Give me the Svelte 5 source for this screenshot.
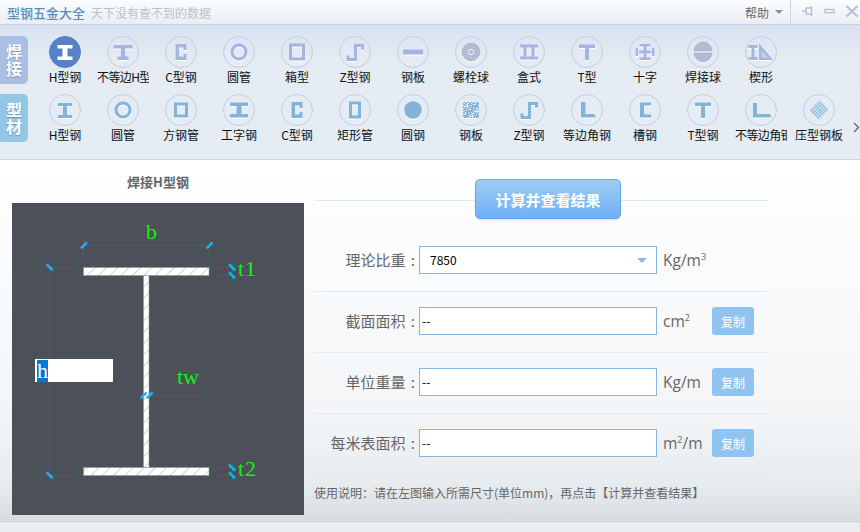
<script>
  const r = (x, y, w, h) => `M${x} ${y}h${w}v${h}h${-w}z`;
  const c = (x, y, a) => `M${x - a} ${y}a${a} ${a} 0 1 0 ${a * 2} 0a${a} ${a} 0 1 0 ${-a * 2} 0z`;

  const I = r(8.5, 9, 15, 3.5) + r(13.5, 12.5, 5, 8) + r(8.5, 20.5, 15, 3.5);
  const Ismall = r(9, 9, 14, 3) + r(14, 12, 4, 9) + r(9, 21, 14, 3);
  const Iunequal = r(6.5, 9, 19, 3.5) + r(14, 12.5, 4, 8) + r(10.5, 20.5, 11, 3.5);
  const Cshape = 'M10.5 8h11v6h-3v-2.5h-4.5v9h4.5V18h3v6h-11z';
  const ring = c(16, 16, 8.5) + c(16, 16, 5.5);
  const box = r(8, 7.5, 16, 17) + r(11, 10.5, 10, 11);
  const zed = 'M7.5 19.5h3v2.5h4.5V8h10v5.5h-3V11h-4v14H7.5z';
  const plate = r(6, 13.5, 20, 5);
  const bolt = c(16, 16, 9) + c(16, 16, 3.5) + c(16, 16, 1.7);
  const boxed = r(7, 8.5, 18, 3) + r(10.5, 11.5, 3, 9) + r(18.5, 11.5, 3, 9) + r(7, 20.5, 18, 3);
  const tee = r(8, 8.5, 16, 3.5) + r(14, 12, 4, 12);
  const cross = r(10.5, 8, 11, 2.5) + r(10.5, 21.5, 11, 2.5) + r(6.5, 12, 2.5, 8) + r(23, 12, 2.5, 8) +
    'M14.5 10.5h3v4h4.5v3h-4.5v4h-3v-4H10v-3h4.5z';
  const ballWeld = 'M7 15a9 9 0 0 1 18 0zM7 17h18a9 9 0 0 1-18 0z';
  const wedge = r(3.5, 9, 9, 3) + r(6.5, 12, 3, 9) + r(3.5, 21, 9, 3) + 'M14 7.5l14 16.5H14z';
  const wedgeIn = 'M16.5 14.5l7.5 7.5h-7.5z';
  const flaredI = 'M7 8.5h18v3.5h-6.5v8h6.5v3.5H7V20h6.5v-8H7z';
  const square = r(9, 8.5, 14, 15) + r(12, 11.5, 8, 9);
  const tall = r(10, 7.5, 12, 17) + r(13, 10.5, 6, 11);
  const solid = c(16, 16, 8.8);
  const angle = 'M10 8h4.5v12h8.5l2 3.5H10z';
  const channel = 'M11 8.5h11v3h-7v9h7v3H11z';
  const angleWide = 'M8 9h4v11h13l1.5 3.5H8z';

  const weld = [
    ['H型钢', I, 'sel'], ['不等边H型', Iunequal, 'clip'], ['C型钢', Cshape], ['圆管', ring],
    ['箱型', box], ['Z型钢', zed], ['钢板', plate], ['螺栓球', bolt, 'ball'],
    ['盒式', boxed], ['T型', tee], ['十字', cross], ['焊接球', ballWeld, 'ball'], ['楔形', wedge, 'wedge']
  ];
  const sect = [
    ['H型钢', Ismall], ['圆管', ring], ['方钢管', square], ['工字钢', flaredI],
    ['C型钢', Cshape], ['矩形管', tall], ['圆钢', solid], ['钢板', '', 'stipple'],
    ['Z型钢', zed], ['等边角钢', angle], ['槽钢', channel], ['T型钢', tee],
    ['不等边角钢', angleWide, 'clip'], ['压型钢板', '', 'corr']
  ];
  const rows = [
    { tab: ['焊', '接'], tone: 'violet', items: weld },
    { tab: ['型', '材'], tone: 'blue', items: sect }
  ];
  const forward = [[69, 45.3], [194.7, 45.3], [128.7, 195.3], [134.7, 195.3]];
  const back = [[34.7, 61.3], [34.7, 269.3], [217, 61.3], [217, 69.3], [217, 261.7], [217, 269.3]];

  const dots = [];
  for (let y = 0; y < 16; y++) {
    for (let x = 0; x < 16; x++) {
      if ((x * 7 + y * 13 + ((x * y) % 5)) % 3 === 0) dots.push([8 + x, 8 + y]);
    }
  }
  const bands = [0, 1, 2, 3, 4, 5];
</script>

<div class="app">
  <header class="title">
    <strong>型钢五金大全</strong>
    <span class="slogan">天下没有查不到的数据</span>
    <div class="win">
      <span class="help">帮助</span>
      <i class="caret"></i>
      <i class="sep"></i>
      <svg width="59" height="14" viewBox="0 0 59 14" fill="none" stroke="#b4c1cf" stroke-width="1.4">
        <path d="M1 7h4M5 3.5v7M5 4h5.5M5 10h5.5M10.5 2v10" />
        <rect x="24" y="5.5" width="9" height="3.2" />
        <path d="M45.5 2l11 10.5M56.5 2l-11 10.5" stroke-width="2.2" />
      </svg>
    </div>
  </header>

  <nav class="tools">
    {#each rows as row}
      <div class="row {row.tone}">
        <div class="tab">{row.tab[0]}<br />{row.tab[1]}</div>
        {#each row.items as [label, d, kind]}
          <div class="item">
            <svg class="ico" width="32" height="32" viewBox="0 0 32 32">
              <circle class={kind === 'sel' ? 'disc on' : 'disc'} cx="16" cy="16" r="15.5" />
              {#if kind === 'stipple'}
                <rect class="shape" x="8" y="8" width="16" height="16" />
                <g fill="#e2ebf4">
                  {#each dots as [x, y]}
                    <rect {x} {y} width="1" height="1" />
                  {/each}
                </g>
              {:else if kind === 'corr'}
                <g class="shape" transform="rotate(45 16 16)">
                  {#each bands as b}
                    <rect x="9.5" y={9.4 + b * 2.4} width="13" height="1.4" />
                  {/each}
                </g>
              {:else}
                <path class={kind === 'sel' ? 'shape white' : kind === 'ball' ? 'shape grey' : 'shape'} {d} fill-rule="evenodd" />
                {#if kind === 'wedge'}
                  <path d={wedgeIn} fill="#c3cdee" />
                {/if}
              {/if}
            </svg>
            <span class={kind === 'clip' ? 'lbl clip' : 'lbl'}>{label}</span>
          </div>
        {/each}
        {#if row.tone === 'blue'}
          <svg class="more" width="7" height="11" viewBox="0 0 7 11" fill="none" stroke="#56677c" stroke-width="1.3">
            <path d="M1 1l4.5 4.5L1 10" />
          </svg>
        {/if}
      </div>
    {/each}
  </nav>

  <main class="main">
    <section class="left">
      <h2>焊接H型钢</h2>
      <div class="canvas">
        <svg width="292" height="312" viewBox="0 0 292 312">
          <defs>
            <pattern id="hatch" width="8" height="8" patternUnits="userSpaceOnUse" patternTransform="rotate(45)">
              <rect width="8" height="8" fill="#fff" />
              <rect width="1" height="8" fill="#d2d3d5" />
            </pattern>
          </defs>
          <g stroke="#1f6b8c" stroke-width="1" fill="none">
            <path d="M71.5 42.5H197M71.5 36v18M197.5 36v18" />
            <path d="M37.5 64.5V272.5M32 64.5H61M32 272.5H61" />
            <path d="M204 64.5H225M204 72.5H225M220.5 58v20" />
            <path d="M204 264.5H225M204 272.5H225M220.5 258v20" />
            <path d="M128 192.5H190M131.5 180v20M137.5 180v20" />
          </g>
          <g fill="url(#hatch)" stroke="#8e9196" stroke-width="0.5">
            <rect x="71.5" y="64.5" width="125.5" height="8" />
            <rect x="131.5" y="72.5" width="5.5" height="192" />
            <rect x="71.5" y="264.5" width="125.5" height="8" />
          </g>
          <g stroke="#0fb9f8" stroke-width="2.4">
            {#each forward as [x, y]}
              <path d="M{x} {y}l6 -6" />
            {/each}
            {#each back as [x, y]}
              <path d="M{x} {y}l6 6" />
            {/each}
          </g>
          <g class="dim">
            <text x="134" y="36">b</text>
            <text x="226" y="73" letter-spacing="1">t1</text>
            <text x="165" y="181">tw</text>
            <text x="226" y="273" letter-spacing="1">t2</text>
          </g>
        </svg>
        <div class="hbox"><span>h</span></div>
      </div>
    </section>

    <section class="right">
      <div class="head">
        <button class="calc">计算并查看结果</button>
      </div>
      <div class="field">
        <span class="name">理论比重 :</span>
        <div class="inp select">7850<i></i></div>
        <span class="unit">Kg/m<sup>3</sup></span>
      </div>
      <div class="field">
        <span class="name">截面面积 :</span>
        <div class="inp">--</div>
        <span class="unit">cm<sup>2</sup></span>
        <button class="copy">复制</button>
      </div>
      <div class="field">
        <span class="name">单位重量 :</span>
        <div class="inp">--</div>
        <span class="unit">Kg/m</span>
        <button class="copy">复制</button>
      </div>
      <div class="field">
        <span class="name">每米表面积 :</span>
        <div class="inp">--</div>
        <span class="unit">m<sup>2</sup>/m</span>
        <button class="copy">复制</button>
      </div>
      <p class="note">使用说明：请在左图输入所需尺寸(单位mm)，再点击【计算并查看结果】</p>
    </section>
  </main>
  <footer class="foot"></footer>
</div>

<style>
  :global(body) {
    margin: 0;
    font-family: "Noto Sans CJK SC", "Open Sans", sans-serif;
  }
  .app {
    width: 860px;
    height: 532px;
    overflow: hidden;
    display: flex;
    flex-direction: column;
  }
  .title {
    height: 25px;
    box-sizing: border-box;
    flex: none;
    display: flex;
    align-items: center;
    padding-left: 7px;
    background: linear-gradient(#fbfdfe, #e9eef5);
    border-bottom: 1px solid #c3d0e4;
  }
  .title strong {
    font-size: 13px;
    font-weight: 500;
    color: #5f8db4;
  }
  .slogan {
    margin-left: 6px;
    font-size: 12px;
    color: #bcc2c8;
  }
  .win {
    margin-left: auto;
    height: 100%;
    display: flex;
    align-items: center;
  }
  .help {
    font-size: 12px;
    color: #666;
  }
  .caret {
    margin: 0 7px 0 6px;
    border: 4px solid transparent;
    border-top: 4px solid #8a8f96;
    border-bottom: 0;
  }
  .sep {
    width: 1px;
    height: 100%;
    background: #ccd6e0;
    margin-right: 10px;
  }
  .win svg {
    margin-bottom: 2px;
  }
  .tools {
    height: 135px;
    box-sizing: border-box;
    flex: none;
    padding-top: 11px;
    background: linear-gradient(#d8e2f0, #e4ebf3 25%, #e5ecf3);
    border-bottom: 1px solid #cfd6df;
    display: flex;
    flex-direction: column;
    gap: 8px;
  }
  .row {
    height: 50px;
    display: flex;
    align-items: flex-start;
  }
  .tab {
    width: 28px;
    height: 48px;
    margin-right: 8px;
    flex: none;
    box-sizing: border-box;
    padding-top: 7px;
    border-radius: 0 5px 5px 0;
    text-align: center;
    font-size: 16px;
    font-weight: 700;
    line-height: 17px;
    color: #fff;
    text-shadow: 0 1px 1px rgba(70, 90, 120, 0.45);
  }
  .violet .tab { background: #a9bfe3; }
  .blue .tab { background: #92c6e5; }
  .item {
    width: 58px;
    flex: none;
    display: flex;
    flex-direction: column;
    align-items: center;
  }
  .ico { display: block; }
  .disc {
    fill: transparent;
    stroke: #c2cee2;
    stroke-width: 1;
  }
  .disc.on {
    fill: #5582c6;
    stroke: #5582c6;
  }
  .shape {
    filter: drop-shadow(0 1px 0 #fff);
  }
  .violet .shape { fill: #a6b4e2; }
  .blue .shape { fill: #82b3d8; }
  .violet .shape.grey { fill: #b2bbd6; stroke: #a0a9c6; stroke-width: 0.6; }
  .violet .shape.white { fill: #fff; filter: none; }
  .lbl {
    width: 58px;
    height: 18px;
    white-space: nowrap;
    text-align: center;
    font-size: 12px;
    line-height: 18px;
    color: #111;
  }
  .lbl.clip {
    width: 52px;
    overflow: hidden;
    text-align: left;
    letter-spacing: -0.6px;
  }
  .more {
    margin: 28px 0 0 5px;
    flex: none;
  }
  .main {
    flex: 1;
    display: flex;
    background: linear-gradient(#fff, #f3f5f7 70%, #e9edf0 88%, #d6dde1);
  }
  .left {
    width: 292px;
    margin-left: 12px;
    flex: none;
  }
  h2 {
    margin: 0;
    height: 43px;
    font-size: 13px;
    font-weight: 700;
    line-height: 44px;
    color: #666;
    text-align: center;
  }
  .canvas {
    height: 312px;
    background: #4c5058;
    position: relative;
  }
  .canvas svg { display: block; }
  .dim text {
    font-family: "Liberation Serif", serif;
    font-size: 22px;
    fill: #14f014;
  }
  .hbox {
    position: absolute;
    left: 23px;
    top: 156px;
    width: 78px;
    height: 23px;
    background: #fff;
    padding-left: 2px;
    box-sizing: border-box;
  }
  .hbox span {
    display: block;
    width: 11px;
    height: 22px;
    margin-top: 1px;
    background: #0078d7;
    color: #fff;
    font: 22px/21px "Liberation Serif", serif;
    text-align: center;
  }
  .right {
    width: 455px;
    margin-left: 10px;
    flex: none;
  }
  .head {
    height: 71px;
    box-sizing: border-box;
    padding: 19px 0 0 161px;
    background: linear-gradient(#dcebf8, #dcebf8) 0 40px / 100% 1px no-repeat;
  }
  .calc {
    display: block;
    width: 146px;
    height: 40px;
    padding: 0;
    border: 1px solid #61a8ee;
    border-radius: 5px;
    background: linear-gradient(#9dccf3, #70b0f6);
    color: #fff;
    font: 700 15px "Noto Sans CJK SC", sans-serif;
    box-shadow: 0 1px 2px rgba(120, 170, 220, 0.3);
  }
  .field {
    height: 61px;
    box-sizing: border-box;
    padding-top: 15px;
    display: flex;
    align-items: flex-start;
    border-bottom: 1px solid #dfeaf4;
  }
  .name {
    width: 101px;
    margin-right: 4px;
    flex: none;
    text-align: right;
    white-space: nowrap;
    word-spacing: 2px;
    font-size: 15px;
    line-height: 28px;
    color: #666;
  }
  .inp {
    width: 238px;
    height: 28px;
    flex: none;
    box-sizing: border-box;
    padding-left: 2px;
    background: #fff;
    border: 1px solid #85b7de;
    font: 12px/26px "Noto Sans CJK SC", sans-serif;
    color: #000;
    position: relative;
  }
  .select { padding-left: 10px; }
  .select i {
    position: absolute;
    right: 9px;
    top: 11px;
    border: 5px solid transparent;
    border-top: 5px solid #91b8da;
    border-bottom: 0;
  }
  .unit {
    width: 49px;
    margin-left: 6px;
    flex: none;
    font: 15.5px/28px "Open Sans", sans-serif;
    color: #666;
    white-space: nowrap;
  }
  sup {
    font-size: 9px;
    line-height: 0;
    vertical-align: 6px;
  }
  .copy {
    width: 42px;
    height: 28px;
    padding: 0;
    border: 0;
    border-radius: 3px;
    background: #90c3ef;
    color: #fff;
    font: 12px "Noto Sans CJK SC", sans-serif;
  }
  .note {
    margin: 9px 0 0;
    font-size: 12px;
    line-height: 18px;
    color: #666;
    white-space: nowrap;
  }
  .foot {
    height: 9px;
    flex: none;
    background: #e9edef;
    border-top: 1px solid #f4f6f7;
    box-sizing: border-box;
  }
</style>
